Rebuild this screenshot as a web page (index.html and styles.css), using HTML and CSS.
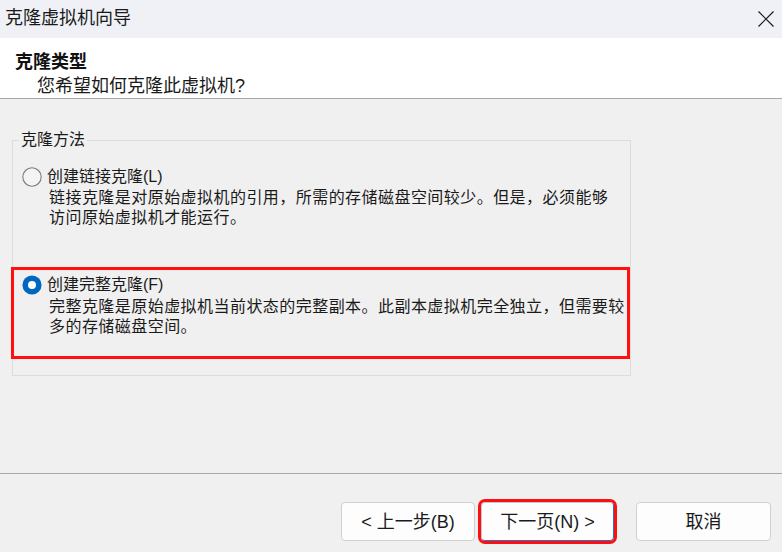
FILE: index.html
```html
<!DOCTYPE html>
<html lang="zh-CN">
<head>
<meta charset="utf-8">
<title>克隆虚拟机向导</title>
<link rel="stylesheet" href="styles.css">
</head>
<body>
<div class="window">
  <div class="titlebar">
    <span class="title">克隆虚拟机向导</span>
    <svg class="close" width="16" height="16" viewBox="0 0 16 16"><path d="M0.5 0.5 L15.5 15.5 M15.5 0.5 L0.5 15.5" stroke="#1a1a1a" stroke-width="1.2" fill="none"/></svg>
  </div>
  <div class="header">
    <div class="h-title">克隆类型</div>
    <div class="h-sub">您希望如何克隆此虚拟机?</div>
  </div>
  <div class="content">
    <fieldset class="group">
      <legend class="legend">克隆方法</legend>
      <div class="option first">
        <div class="opt-row">
          <svg class="radio" width="20" height="20" viewBox="0 0 20 20"><circle cx="10" cy="10" r="9.2" fill="#f4f4f4" stroke="#7c7c7c" stroke-width="1.1"/></svg>
          <span class="opt-label">创建链接克隆(L)</span>
        </div>
        <div class="opt-desc">链接克隆是对原始虚拟机的引用，所需的存储磁盘空间较少。但是，必须能够<br>访问原始虚拟机才能运行。</div>
      </div>
      <div class="option highlight">
        <div class="opt-row">
          <svg class="radio" width="20" height="20" viewBox="0 0 20 20"><circle cx="10" cy="10" r="9.6" fill="#0067c0"/><circle cx="10" cy="10" r="4" fill="#ffffff"/></svg>
          <span class="opt-label">创建完整克隆(F)</span>
        </div>
        <div class="opt-desc">完整克隆是原始虚拟机当前状态的完整副本。此副本虚拟机完全独立，但需要较<br>多的存储磁盘空间。</div>
      </div>
    </fieldset>
  </div>
  <div class="footer">
    <button class="btn back">&lt; 上一步(B)</button>
    <button class="btn next">下一页(N) &gt;</button>
    <button class="btn cancel">取消</button>
  </div>
</div>
</body>
</html>
```
FILE: styles.css
```css
html, body {
  margin: 0;
  padding: 0;
}
body {
  width: 782px;
  height: 552px;
  overflow: hidden;
  background: #f0f0f0;
  font-family: "Liberation Sans", "Noto Sans CJK SC", sans-serif;
  color: #1a1a1a;
}
.window {
  width: 782px;
  height: 552px;
  display: flex;
  flex-direction: column;
}
.titlebar {
  height: 38px;
  flex: none;
  box-sizing: border-box;
  background: #eff1f7;
  display: flex;
  align-items: center;
  justify-content: space-between;
  padding: 0 8px 2px 5px;
}
.title {
  font-size: 18px;
  line-height: 24px;
}
.close {
  display: block;
  margin-top: 1px;
}
.header {
  height: 61px;
  flex: none;
  box-sizing: border-box;
  background: #ffffff;
  border-bottom: 1px solid #a8a8a8;
  padding: 12px 0 0 15px;
}
.h-title {
  font-size: 18px;
  font-weight: bold;
  line-height: 24px;
  color: #111;
}
.h-sub {
  font-size: 18px;
  line-height: 23px;
  margin-top: 1px;
  padding-left: 22px;
}
.content {
  height: 375px;
  flex: none;
  box-sizing: border-box;
  border-bottom: 1px solid #a8a8a8;
  padding: 31px 0 0 12px;
}
.group {
  margin: 0;
  width: 619px;
  box-sizing: border-box;
  border: 1px solid #dcdcdc;
  padding: 0 0 16px 0;
}
.legend {
  margin-left: 6px;
  padding: 0 2px;
  font-size: 16px;
  line-height: 20px;
}
.option.first {
  margin-top: 17px;
  padding-left: 9px;
}
.opt-row {
  display: flex;
  align-items: center;
  gap: 5px;
  height: 20px;
}
.radio {
  display: block;
  flex: none;
}
.opt-label {
  font-size: 16px;
  line-height: 20px;
}
.opt-desc {
  font-size: 16px;
  line-height: 20px;
  letter-spacing: 0.45px;
  padding-left: 27px;
  margin-top: 1px;
}
.option.highlight {
  margin: 39px 0 0 -2px;
  border: 3px solid #ff0f0f;
  padding: 5px 0 19px 8px;
}
.highlight .opt-desc {
  margin-top: 2px;
}
.footer {
  flex: 1;
  display: flex;
  align-items: flex-start;
  padding: 28px 0 0 341px;
  box-sizing: border-box;
}
.btn {
  font-family: "Liberation Sans", "Noto Sans CJK SC", sans-serif;
  font-size: 18px;
  color: #1a1a1a;
  height: 39px;
  background: #fdfdfd;
  border: 1px solid #d0d0d0;
  border-radius: 4px;
  padding: 0;
  line-height: 22px;
}
.back {
  width: 134px;
}
.next {
  width: 133px;
  margin-left: 6px;
  border-color: #b9c9de;
  border-right-color: #2f6fc0;
  border-bottom-color: #2f6fc0;
  outline: 3px solid #ff1010;
  outline-offset: 0;
}
.cancel {
  width: 135px;
  margin-left: 22px;
}
```
